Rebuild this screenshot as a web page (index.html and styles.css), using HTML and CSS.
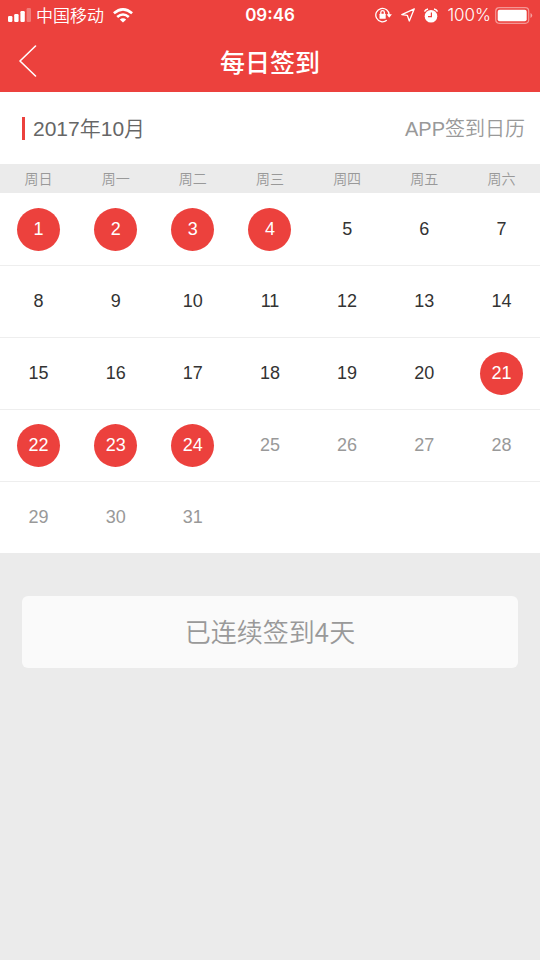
FILE: index.html
```
<!DOCTYPE html>
<html lang="zh-CN">
<head>
<meta charset="utf-8">
<meta name="viewport" content="width=device-width, initial-scale=1">
<title>每日签到</title>
<link rel="stylesheet" href="styles.css">
</head>
<body>
<header class="top">
  <div class="status">
    <div class="status-side">
      <svg class="signal" width="23" height="14" viewBox="0 0 23 14" fill="#fff" aria-hidden="true">
        <rect x="0" y="8" width="4.400" height="6" rx="1.200"/><rect x="6.200" y="6" width="4.400" height="8" rx="1.200"/><rect x="12.400" y="3" width="4.400" height="11" rx="1.200"/><rect x="18.600" y="0" width="4.400" height="14" rx="1.200" opacity=".3"/>
      </svg>
      <span class="carrier">中国移动</span>
      <svg width="20" height="15" viewBox="0 0 20 15" fill="none" stroke="#fff" stroke-width="2.600" aria-hidden="true">
        <path d="M.9 5.300Q10-2.600 19.100 5.300M4.200 9Q10 4 15.800 9"/><path d="M10 14.500L6.800 11.400Q10 8.900 13.200 11.400Z" fill="#fff" stroke="none"/>
      </svg>
    </div>
    <time class="clock">09:46</time>
    <div class="status-side status-right">
      <svg width="17" height="16" viewBox="0 0 17 16" fill="none" stroke="#fff" stroke-width="1.300" aria-hidden="true">
        <path d="M11.800 13.200A6.700 6.700 0 1 1 14.200 8"/><path d="M11.600 7.300H16.900L14.200 10.800Z" fill="#fff" stroke="none"/><rect x="4.500" y="6.800" width="6.200" height="4.900" rx=".5" fill="#fff" stroke="none"/><path d="M5.800 7.200V5.500a1.800 1.800 0 0 1 3.600 0V7.200"/>
      </svg>
      <svg width="14" height="14" viewBox="0 0 14 14" fill="none" stroke="#fff" stroke-width="1.300" stroke-linejoin="round" aria-hidden="true">
        <path d="M13.300.8L.8 6.600L6.300 7.300L8.300 13Z"/>
      </svg>
      <svg width="14" height="15" viewBox="0 0 14 15" aria-hidden="true">
        <circle cx="7" cy="8.200" r="6.300" fill="#fff"/><path d="M.6 3.600Q1.300 1.300 4 .9M13.400 3.600Q12.700 1.300 10 .9" fill="none" stroke="#fff" stroke-width="1.500"/><path d="M7.400 4.500V8.600H4" fill="none" stroke="#ec413d" stroke-width="1.200"/>
      </svg>
      <span class="percent">100%</span>
      <svg class="battery" width="38" height="17" viewBox="0 0 38 17" aria-hidden="true">
        <rect x=".7" y=".7" width="33" height="15.600" rx="3.500" fill="none" stroke="#fff" stroke-opacity=".45" stroke-width="1.200"/><rect x="2.700" y="2.700" width="29" height="11.600" rx="2" fill="#fff"/><path d="M35.500 6Q37.200 6.800 37.200 8.500T35.500 11Z" fill="#fff" opacity=".5"/>
      </svg>
    </div>
  </div>
  <div class="nav">
    <button class="back" type="button" aria-label="返回">
      <svg width="18" height="32" viewBox="0 0 18 32" fill="none" stroke="#fff" stroke-width="1.600" stroke-linecap="round" stroke-linejoin="round"><path d="M16.500 1L1 16L16.500 31"/></svg>
    </button>
    <h1>每日签到</h1>
  </div>
</header>
<main>
  <div class="heading">
    <h2>2017年10月</h2>
    <span class="caption">APP签到日历</span>
  </div>
  <table class="calendar">
    <thead>
      <tr><th>周日</th><th>周一</th><th>周二</th><th>周三</th><th>周四</th><th>周五</th><th>周六</th></tr>
    </thead>
    <tbody>
      <tr><td><span class="signed">1</span></td><td><span class="signed">2</span></td><td><span class="signed">3</span></td><td><span class="signed">4</span></td><td>5</td><td>6</td><td>7</td></tr>
      <tr><td>8</td><td>9</td><td>10</td><td>11</td><td>12</td><td>13</td><td>14</td></tr>
      <tr><td>15</td><td>16</td><td>17</td><td>18</td><td>19</td><td>20</td><td><span class="signed">21</span></td></tr>
      <tr><td><span class="signed">22</span></td><td><span class="signed">23</span></td><td><span class="signed">24</span></td><td class="future">25</td><td class="future">26</td><td class="future">27</td><td class="future">28</td></tr>
      <tr><td class="future">29</td><td class="future">30</td><td class="future">31</td><td></td><td></td><td></td><td></td></tr>
    </tbody>
  </table>
  <div class="action">
    <button class="streak" type="button">已连续签到4天</button>
  </div>
</main>
</body>
</html>
```
FILE: styles.css
```
* { box-sizing: border-box; }

body {
  margin: 0;
  min-height: 100vh;
  background: #ebebeb;
  color: #333;
  font-family: "Liberation Sans", "Noto Sans CJK SC", sans-serif;
}

svg { display: block; flex: none; }
h1, h2 { margin: 0; }
button { border: 0; font: inherit; }

.top { background: #ec413d; color: #fff; }

.status {
  display: grid;
  grid-template-columns: 1fr auto 1fr;
  align-items: center;
  height: 30px;
  padding: 0 8px;
}

.status-side { display: flex; align-items: center; gap: 9px; }
.status-right { justify-content: flex-end; margin-right: -1px; }
.signal { margin-right: -4px; }
.carrier { font-family: "Noto Sans CJK SC", sans-serif; font-size: 17px; line-height: 24px; font-weight: 350; }
.clock { font-family: Inter, sans-serif; font-size: 17px; line-height: 24px; font-weight: 600; }
.percent { font-family: Inter, sans-serif; font-size: 17px; line-height: 24px; font-weight: 300; }
.battery { margin-left: -5px; }

.nav {
  display: grid;
  grid-template-columns: 56px 1fr 56px;
  align-items: center;
  height: 62px;
}

.back { padding: 0 0 0 19px; background: none; }

.nav h1 {
  font-family: "Noto Sans CJK SC", sans-serif;
  font-size: 25px;
  line-height: 36px;
  font-weight: 500;
  text-align: center;
}

.heading {
  display: flex;
  align-items: center;
  justify-content: space-between;
  height: 72px;
  padding: 0 15px 0 22px;
  background: #fff;
}

.heading h2 {
  padding-left: 8px;
  border-left: 3px solid #ec413d;
  color: #666;
  font-size: 21px;
  line-height: 23px;
  font-weight: 350;
}

.caption { padding-top: 2px; color: #999; font-size: 20px; line-height: 30px; font-weight: 350; }

.calendar {
  width: 100%;
  table-layout: fixed;
  border-collapse: separate;
  border-spacing: 0;
  background: #fff;
  text-align: center;
}

.calendar th {
  height: 29px;
  padding: 0;
  background: #ebebeb;
  color: #999;
  font-size: 14px;
  line-height: 20px;
  font-weight: 350;
}

.calendar td { height: 72px; padding: 0; font-size: 18px; line-height: 24px; }
.calendar tr + tr td { box-shadow: inset 0 1px #eee; }
.calendar .future { color: #999; }

.signed {
  display: block;
  width: 43px;
  margin: 0 auto;
  border-radius: 50%;
  background: #ec413d;
  color: #fff;
  line-height: 43px;
}

.action { padding: 43px 22px; }

.streak {
  width: 100%;
  height: 72px;
  padding: 0 0 3px;
  border-radius: 6px;
  background: #fafafa;
  color: #999;
  font-family: "Noto Sans CJK SC", sans-serif;
  font-size: 26px;
  font-weight: 350;
}
```
